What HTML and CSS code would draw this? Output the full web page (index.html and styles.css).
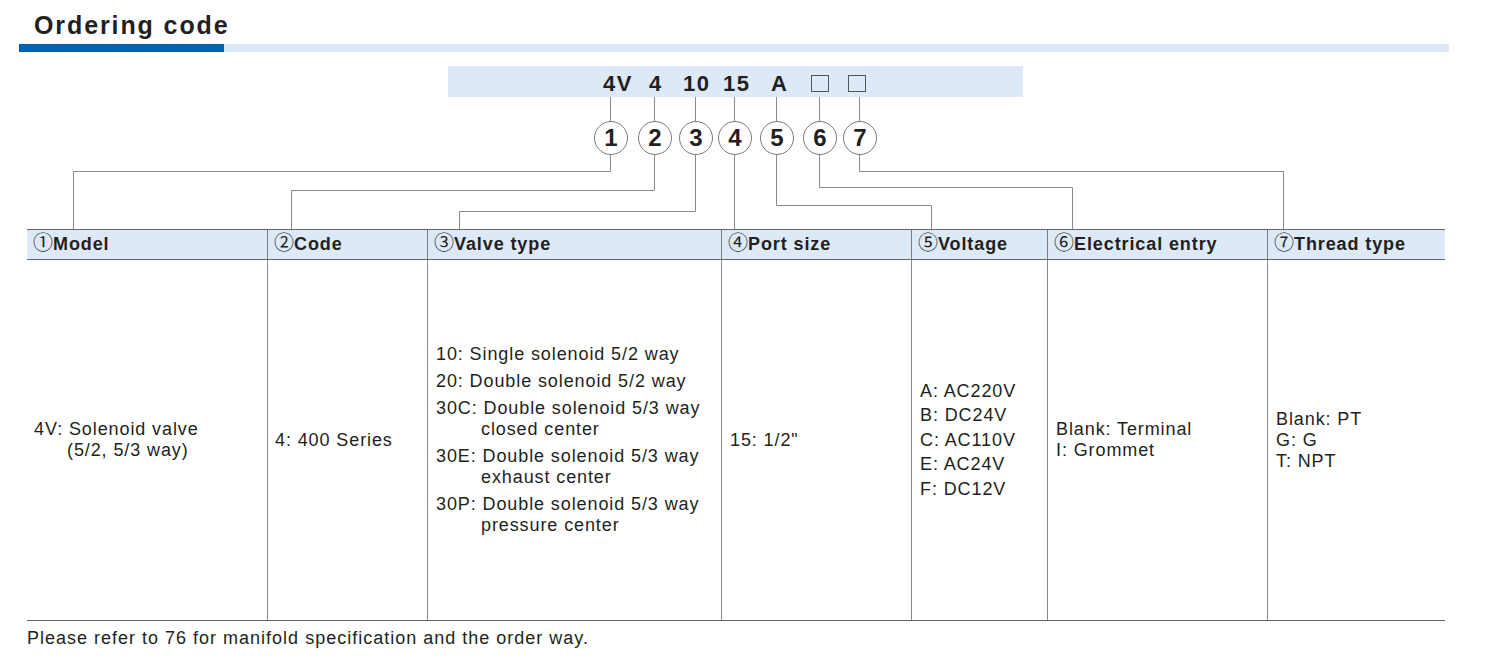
FILE: index.html
```html
<!DOCTYPE html>
<html lang="en">
<head>
<meta charset="utf-8">
<title>Ordering code</title>
<link rel="stylesheet" href="styles.css">
</head>
<body>
<h1 class="title">Ordering code</h1>
<div class="title-bar"><div class="title-bar-accent"></div></div>

<div class="diagram">
  <div class="code-bar"></div>
  <span class="token t1">4V</span>
  <span class="token t2">4</span>
  <span class="token t3">10</span>
  <span class="token t4">15</span>
  <span class="token t5">A</span>
  <span class="blank b6"></span>
  <span class="blank b7"></span>

  <svg class="wires" width="1493" height="163" viewBox="0 0 1493 163" xmlns="http://www.w3.org/2000/svg">
    <g fill="none" stroke="#8a8a8a" stroke-width="1">
      <path d="M610.5 31 V55"/>
      <path d="M654.5 31 V55"/>
      <path d="M695.5 31 V55"/>
      <path d="M734.5 31 V55"/>
      <path d="M776.5 31 V55"/>
      <path d="M819.5 31 V55"/>
      <path d="M859.5 31 V55"/>

      <path d="M610.5 88 V105.5 H73.5 V163"/>
      <path d="M654.5 88 V124.5 H291.5 V163"/>
      <path d="M695.5 88 V145.5 H459.5 V163"/>
      <path d="M734.5 88 V163"/>
      <path d="M776.5 88 V139.5 H931.5 V163"/>
      <path d="M819.5 88 V121.5 H1072.5 V163"/>
      <path d="M859.5 88 V105.5 H1283.5 V163"/>
    </g>
  </svg>

  <span class="num n1">1</span>
  <span class="num n2">2</span>
  <span class="num n3">3</span>
  <span class="num n4">4</span>
  <span class="num n5">5</span>
  <span class="num n6">6</span>
  <span class="num n7">7</span>
</div>

<div class="spec">
  <div class="hd"><span class="cn">①</span>Model</div>
  <div class="hd"><span class="cn">②</span>Code</div>
  <div class="hd"><span class="cn">③</span>Valve type</div>
  <div class="hd"><span class="cn">④</span>Port size</div>
  <div class="hd"><span class="cn">⑤</span>Voltage</div>
  <div class="hd"><span class="cn">⑥</span>Electrical entry</div>
  <div class="hd"><span class="cn">⑦</span>Thread type</div>

  <div class="cell">
    <div class="lines">
      <div>4V: Solenoid valve</div>
      <div class="indent-model">(5/2, 5/3 way)</div>
    </div>
  </div>
  <div class="cell">
    <div class="lines"><div>4: 400 Series</div></div>
  </div>
  <div class="cell">
    <div class="lines">
      <div class="item">10: Single solenoid 5/2 way</div>
      <div class="item">20: Double solenoid 5/2 way</div>
      <div class="item">30C: Double solenoid 5/3 way<div class="indent-valve">closed center</div></div>
      <div class="item">30E: Double solenoid 5/3 way<div class="indent-valve">exhaust center</div></div>
      <div class="item">30P: Double solenoid 5/3 way<div class="indent-valve">pressure center</div></div>
    </div>
  </div>
  <div class="cell">
    <div class="lines"><div>15: 1/2"</div></div>
  </div>
  <div class="cell">
    <div class="lines loose">
      <div>A: AC220V</div>
      <div>B: DC24V</div>
      <div>C: AC110V</div>
      <div>E: AC24V</div>
      <div>F: DC12V</div>
    </div>
  </div>
  <div class="cell">
    <div class="lines">
      <div>Blank: Terminal</div>
      <div>I: Grommet</div>
    </div>
  </div>
  <div class="cell">
    <div class="lines">
      <div>Blank: PT</div>
      <div>G: G</div>
      <div>T: NPT</div>
    </div>
  </div>
</div>

<p class="note">Please refer to 76 for manifold specification and the order way.</p>
</body>
</html>
```

FILE: styles.css
```css
* {
  box-sizing: border-box;
}

html, body {
  margin: 0;
  padding: 0;
  background: #ffffff;
}

body {
  width: 1493px;
  height: 660px;
  overflow: hidden;
  font-family: "Liberation Sans", "Noto Sans CJK SC", sans-serif;
  color: #231f20;
}

.title {
  margin: 0;
  padding: 10px 0 0 34px;
  font-size: 25px;
  line-height: 30px;
  font-weight: bold;
  letter-spacing: 1.9px;
  color: #231f20;
}

.title-bar {
  margin: 4px 0 0 19px;
  width: 1430px;
  height: 8px;
  background: #dde9f7;
}

.title-bar-accent {
  width: 205px;
  height: 8px;
  background: #0062b1;
}

/* ---------- ordering code diagram ---------- */
.diagram {
  position: relative;
  margin-top: 14px;
  height: 163px;
}

.code-bar {
  margin-left: 448px;
  width: 575px;
  height: 31px;
  background: #dde9f7;
}

.wires {
  position: absolute;
  left: 0;
  top: 0;
}

.token {
  position: absolute;
  top: 2px;
  font-size: 22px;
  line-height: 31px;
  font-weight: bold;
  letter-spacing: 1.5px;
  color: #231f20;
}

.t1 { left: 603px; }
.t2 { left: 649px; }
.t3 { left: 683px; }
.t4 { left: 723px; }
.t5 { left: 771px; }

.blank {
  position: absolute;
  top: 9px;
  width: 18px;
  height: 17px;
  border: 1px solid #555555;
  background: transparent;
}

.b6 { left: 811px; }
.b7 { left: 848px; }

.num {
  position: absolute;
  top: 55px;
  width: 34px;
  height: 34px;
  border: 1px solid #7a7a7a;
  border-radius: 50%;
  background: #ffffff;
  text-align: center;
  font-size: 24px;
  line-height: 32px;
  font-weight: bold;
  color: #231f20;
}

.n1 { left: 594px; }
.n2 { left: 638px; }
.n3 { left: 679px; }
.n4 { left: 718px; }
.n5 { left: 760px; }
.n6 { left: 803px; }
.n7 { left: 843px; }

/* ---------- specification table ---------- */
.spec {
  margin-left: 27px;
  width: 1418px;
  display: grid;
  grid-template-columns: 240px 160px 294px 190px 136px 220px 178px;
  grid-template-rows: 30px 360px;
  border-top: 1px solid #666666;
  border-bottom: 1px solid #666666;
}

.hd {
  background: #dde9f7;
  border-bottom: 1px solid #666666;
  padding-left: 6px;
  font-size: 18px;
  line-height: 28px;
  font-weight: bold;
  letter-spacing: 0.9px;
  white-space: nowrap;
}

.cn {
  font-family: "Noto Sans CJK SC", sans-serif;
  font-weight: normal;
  font-size: 20px;
  line-height: 0;
  letter-spacing: 0;
  margin-right: 0;
}

.hd + .hd {
  border-left: 1px solid #7d7d7d;
}

.cell {
  display: flex;
  align-items: center;
  padding-left: 7px;
  font-size: 18px;
  line-height: 21px;
  letter-spacing: 0.9px;
  white-space: nowrap;
  border-left: 1px solid #8a8a8a;
}

.cell:nth-child(8) {
  border-left: none;
}

.cell:nth-child(n+10) {
  padding-left: 8px;
}

.indent-model {
  padding-left: 33px;
}

.item + .item {
  margin-top: 6px;
}

.indent-valve {
  padding-left: 45px;
}

.loose {
  line-height: 24.5px;
}

.note {
  margin: 7px 0 0 27px;
  font-size: 18px;
  line-height: 21px;
  letter-spacing: 1px;
  color: #231f20;
}
```
